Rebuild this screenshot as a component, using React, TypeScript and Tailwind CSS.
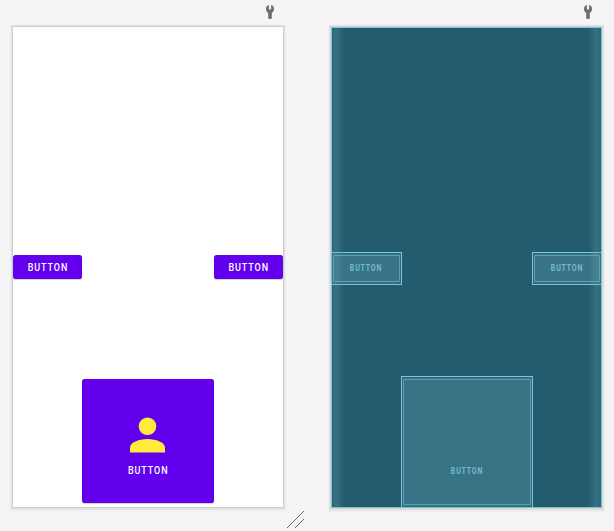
import React from "react";

function Wrench() {
  return (
    <svg className="block h-[14px] w-2" viewBox="0 0 8 14" fill="#6e6e6e" aria-hidden="true">
      <path d="M2.9 0V4L3.3 4.6H4.7L5.1 4V0C7 .3 8 2 8 4C8 5.8 7.2 7.2 5.8 7.8V13C5.8 13.6 5.2 14 4 14S2.2 13.6 2.2 13V7.8C.8 7.2 0 5.8 0 4C0 2 1 .3 2.9 0Z" />
    </svg>
  );
}

const purple =
  "flex items-center justify-center rounded-[2.5px] bg-[#6200ee] text-[9px] font-medium leading-none tracking-[0.9px] text-white shadow-[0_1px_1px_rgba(0,0,0,0.18)]";

function Blueprint({ className, label }: { className: string; label: string }) {
  return (
    <div className={"flex border border-[#7bc7d7] " + className}>
      <div className="flex flex-1 bg-[#30697b] p-px">
        <div className="flex flex-1 bg-[#387386] pt-px">
          <div className="mb-px flex flex-1 justify-center rounded-[1px] border border-[#5ba1b5] text-[7px] font-bold leading-none tracking-[0.8px] text-[#72bed0]">
            <span className={"h-[7px] scale-y-[1.3] " + label}>BUTTON</span>
          </div>
        </div>
      </div>
    </div>
  );
}

export default function App() {
  return (
    <main className="flex h-[531px] w-[614px] overflow-hidden bg-[#f4f4f4] pl-[13px] font-['Roboto',sans-serif]">
      <section className="w-[270px] shrink-0">
        <div className="flex h-[27px] justify-end pr-[9px] pt-[5px]">
          <Wrench />
        </div>
        <div className="flex h-[480px] flex-col bg-white pt-[228px] shadow-[0_0_0_1px_#d0d0d0,0_0_0_2px_#e0e0e0,0_1px_2px_2px_rgba(0,0,0,0.07)]">
          <div className="flex justify-between">
            <button className={purple + " h-6 w-[69px] pl-px pt-[2px]"}>
              <span className="scale-y-[1.15]">BUTTON</span>
            </button>
            <button className={purple + " h-6 w-[69.5px] pl-px pt-[2px]"}>
              <span className="scale-y-[1.15]">BUTTON</span>
            </button>
          </div>
          <button className={purple + " ml-[69px] mt-[100.4px] h-[123.6px] w-[131.5px] flex-col pt-[10px]"}>
            <svg className="block h-[36px] w-[35px]" viewBox="0 0 35 36" fill="#ffeb3b" aria-hidden="true">
              <circle cx="17.5" cy="9.3" r="8.8" />
              <path d="M0 35.5V30.5C0 25.5 9 22 17.5 22S35 25.5 35 30.5V35.5Z" />
            </svg>
            <span className="mt-[14px] scale-y-[1.15] pl-px">BUTTON</span>
          </button>
        </div>
      </section>

      <div className="flex w-12 shrink-0 items-end pb-[2px] pl-[3px]">
        <svg className="h-[19px] w-[19px]" viewBox="0 0 19 19" fill="none" stroke="#606060" aria-hidden="true">
          <path d="M1 18L18 1M9 18L18 9" />
        </svg>
      </div>

      <section className="w-[271px] shrink-0">
        <div className="flex h-[27px] justify-end pr-[10px] pt-[5px]">
          <Wrench />
        </div>
        <div className="grid h-[481px] bg-[#235c6f] shadow-[0_0_0_1px_#d6d6d6,0_0_0_2px_#e2e2e2,0_1px_2px_2px_rgba(0,0,0,0.07)]">
          <div className="col-start-1 row-start-1 flex flex-col pt-[225px]">
            <div className="flex justify-between">
              <Blueprint className="h-[33px] w-[71px]" label="mt-[10px] pr-px" />
              <Blueprint className="h-[33px] w-[70px]" label="mt-[10px]" />
            </div>
            <Blueprint className="ml-[70px] mt-[91px] h-[132px] w-[132px]" label="mt-[89px]" />
          </div>
          <div className="col-start-1 row-start-1 flex justify-between border border-[#79c5d4]">
            <div className="w-3 bg-[linear-gradient(to_right,rgba(105,165,180,0.12),rgba(105,165,180,0.28)_35%,rgba(105,165,180,0.2)_60%,transparent)]" />
            <div className="w-3 bg-[linear-gradient(to_left,rgba(105,165,180,0.12),rgba(105,165,180,0.28)_35%,rgba(105,165,180,0.2)_60%,transparent)]" />
          </div>
        </div>
      </section>
    </main>
  );
}
